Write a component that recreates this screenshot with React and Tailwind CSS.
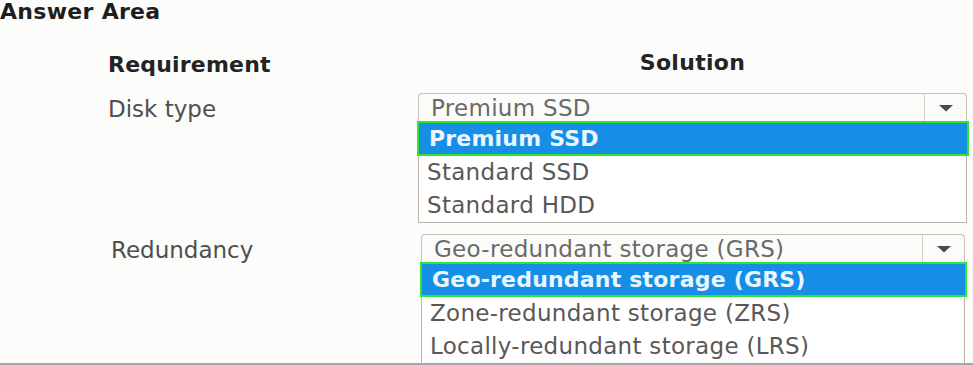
import React from 'react';

const font = { fontFamily: '"DejaVu Sans", "Noto Sans", sans-serif' };

function Caret() {
  return (
    <svg width="16" height="8" viewBox="0 0 16 8" className="block">
      <polygon points="1,1 15,1 8,7.5" fill="#4a4a4a" />
    </svg>
  );
}

function Dropdown({ value, options, selected, width }) {
  return (
    <div className={width}>
      {/* closed select header */}
      <div className="flex h-[28px] items-stretch rounded-t-[4px] border border-b-0 border-[#c4c1bd] bg-[#fbfbfa]">
        <div className="flex flex-1 items-center pl-[12px] pt-[2px] text-[23px] leading-none tracking-[0.3px] whitespace-nowrap text-[#6a6a6a]">
          {value}
        </div>
        <div className="flex w-[42px] items-center justify-center border-l border-[#d3d0cc]">
          <Caret />
        </div>
      </div>
      {/* open list */}
      <div className="border-x border-b border-[#b8b5b1] bg-white">
        {options.map((opt) =>
          opt === selected ? (
            <div
              key={opt}
              className="-ml-[2px] -mr-[3px] flex h-[35px] items-center border-2 border-[#2ee62e] bg-[#178ee6] pl-[10px] text-[22px] font-bold leading-none tracking-[0.2px] whitespace-nowrap text-[#eaf6ff]"
            >
              {opt}
            </div>
          ) : (
            <div key={opt} className="flex h-[33px] items-center pl-[8px] text-[23px] leading-none tracking-[0.3px] whitespace-nowrap text-[#5a5757]">
              {opt}
            </div>
          )
        )}
      </div>
    </div>
  );
}

export default function App() {
  return (
    <div className="relative h-[365px] w-[973px] overflow-hidden bg-[#fcfcfb]" style={font}>
      <div className="h-[24px] text-[22px] font-bold leading-[24px] tracking-[0.3px] text-[#1e1e1e]">Answer Area</div>

      {/* headings row */}
      <div className="mt-[29px] flex h-[24px] items-center">
        <div className="w-[418px] pl-[108px] text-[22px] font-bold leading-none tracking-[0.2px] text-[#232323]">Requirement</div>
        <div className="-mt-[5px] w-[549px] text-center text-[22px] font-bold leading-none tracking-[0.3px] text-[#232323]">Solution</div>
      </div>

      {/* disk type row */}
      <div className="mt-[16px] flex">
        <div className="w-[418px] pl-[108px] pt-[5px] text-[23px] leading-[23px] text-[#4f4f4f]">Disk type</div>
        <Dropdown
          width="w-[549px]"
          value="Premium SSD"
          selected="Premium SSD"
          options={['Premium SSD', 'Standard SSD', 'Standard HDD']}
        />
      </div>

      {/* redundancy row */}
      <div className="mt-[11px] flex">
        <div className="w-[421px] pl-[111px] pt-[5px] text-[23px] leading-[23px] text-[#4f4f4f]">Redundancy</div>
        <Dropdown
          width="w-[544px]"
          value="Geo-redundant storage (GRS)"
          selected="Geo-redundant storage (GRS)"
          options={['Geo-redundant storage (GRS)', 'Zone-redundant storage (ZRS)', 'Locally-redundant storage (LRS)']}
        />
      </div>

      <div className="absolute bottom-0 left-0 h-[2px] w-full bg-[#a9a7a4]" />
    </div>
  );
}
